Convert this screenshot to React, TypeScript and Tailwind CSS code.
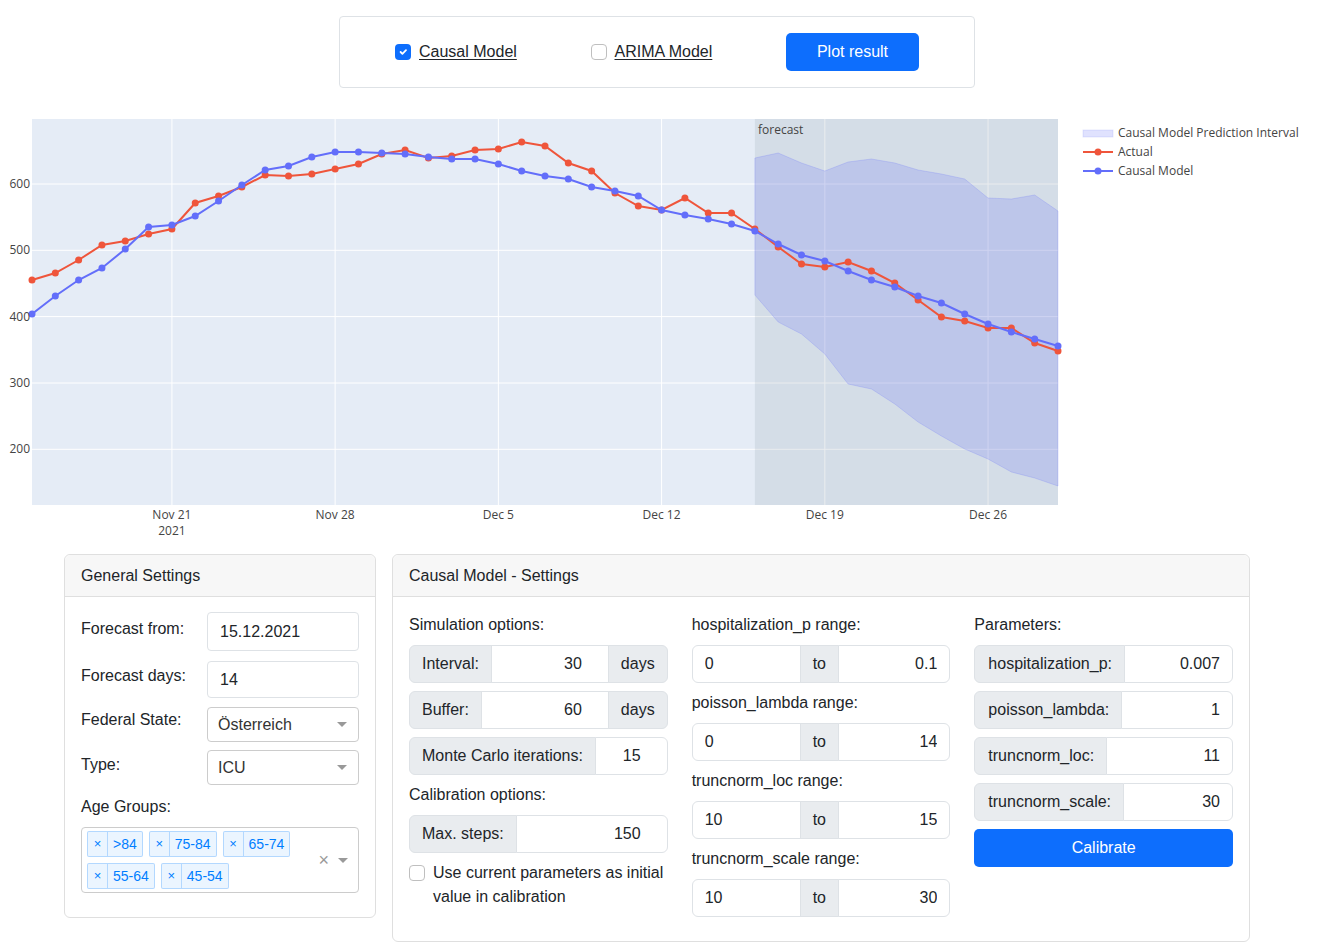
import React from 'react';

const X0 = 32;
const DX = 1026 / 44;
const xs = (i: number) => X0 + i * DX;

const red = [279, 272, 259, 244, 240, 233, 228, 202, 195, 186, 174, 175, 173, 168, 163, 153, 149, 157, 155, 149, 148, 141, 145, 162, 170, 192, 205, 209, 197, 212, 212, 228, 246, 263, 266, 261, 270, 282, 299, 316, 320, 327, 327, 342, 350];
const blue = [313, 295, 279, 267, 248, 226, 224, 215, 200, 184, 169, 165, 156, 151, 151, 152, 153, 156, 158, 158, 163, 170, 175, 178, 186, 190, 195, 209, 214, 218, 223, 230, 243, 254, 260, 270, 279, 286, 295, 302, 313, 323, 331, 338, 345];
const up = [157, 152, 162, 170, 161, 158, 162, 169, 173, 178, 197, 198, 194, 210];
const lo = [294, 321, 333, 353, 383, 388, 403, 421, 435, 448, 458, 471, 477, 485];

const yTicks: [string, number][] = [
  ['600', 183],
  ['500', 249.3],
  ['400', 315.6],
  ['300', 382],
  ['200', 448.3],
];
const xTicks: [string, number][] = [
  ['Nov 21', 6],
  ['Nov 28', 13],
  ['Dec 5', 20],
  ['Dec 12', 27],
  ['Dec 19', 34],
  ['Dec 26', 41],
];

function Chart() {
  const pts = (arr: number[]) => arr.map((y, i) => `${xs(i).toFixed(1)},${y}`).join(' ');
  const upPts = up.map((y, i) => `${xs(i + 31).toFixed(1)},${y}`);
  const loPts = lo.map((y, i) => `${xs(i + 31).toFixed(1)},${y}`);
  const band = [...upPts, ...loPts.slice().reverse()].join(' ');
  const font = "'Open Sans', 'Liberation Sans', sans-serif";
  return (
    <svg width={1321} height={466} viewBox="0 87 1321 466" className="block">
      <rect x={32} y={118} width={1026} height={386} fill="#e5ecf6" />
      {yTicks.map(([, y]) => (
        <line key={y} x1={32} x2={1058} y1={y} y2={y} stroke="#ffffff" strokeWidth={1} />
      ))}
      {xTicks.map(([, i]) => (
        <line key={i} x1={xs(i)} x2={xs(i)} y1={118} y2={504} stroke="#ffffff" strokeWidth={1} />
      ))}
      <rect x={xs(31)} y={118} width={1058 - xs(31)} height={386} fill="#7f8c9c" fillOpacity={0.16} />
      <polygon points={band} fill="rgba(99,110,250,0.2)" stroke="rgba(99,110,250,0.22)" strokeWidth={1} />
      <polyline points={pts(red)} fill="none" stroke="#ef553b" strokeWidth={2} />
      {red.map((y, i) => (
        <circle key={i} cx={xs(i)} cy={y} r={3.5} fill="#ef553b" />
      ))}
      <polyline points={pts(blue)} fill="none" stroke="#636efa" strokeWidth={2} />
      {blue.map((y, i) => (
        <circle key={i} cx={xs(i)} cy={y} r={3.5} fill="#636efa" />
      ))}
      <text x={758} y={133} fontSize={12} fill="#444" fontFamily={font}>forecast</text>
      {yTicks.map(([t, y]) => (
        <text key={t} x={30} y={y + 4} fontSize={12} fill="#444" textAnchor="end" fontFamily={font}>{t}</text>
      ))}
      {xTicks.map(([t, i]) => (
        <text key={t} x={xs(i)} y={518} fontSize={12} fill="#444" textAnchor="middle" fontFamily={font}>{t}</text>
      ))}
      <text x={xs(6)} y={534} fontSize={12} fill="#444" textAnchor="middle" fontFamily={font}>2021</text>
      {/* legend */}
      <rect x={1083} y={129} width={30} height={7} fill="rgba(99,110,250,0.2)" stroke="rgba(99,110,250,0.15)" />
      <text x={1118} y={136} fontSize={12} fill="#444" fontFamily={font}>Causal Model Prediction Interval</text>
      <line x1={1083} x2={1113} y1={151} y2={151} stroke="#ef553b" strokeWidth={2} />
      <circle cx={1098} cy={151} r={3.5} fill="#ef553b" />
      <text x={1118} y={155} fontSize={12} fill="#444" fontFamily={font}>Actual</text>
      <line x1={1083} x2={1113} y1={170} y2={170} stroke="#636efa" strokeWidth={2} />
      <circle cx={1098} cy={170} r={3.5} fill="#636efa" />
      <text x={1118} y={174} fontSize={12} fill="#444" fontFamily={font}>Causal Model</text>
    </svg>
  );
}

function CheckedBox() {
  return (
    <span className="flex h-4 w-4 shrink-0 items-center justify-center rounded-[4px] bg-[#0d6efd]">
      <svg width="12" height="12" viewBox="0 0 20 20">
        <path d="M6 10l3 3 6-6" fill="none" stroke="#fff" strokeWidth="3" strokeLinecap="round" strokeLinejoin="round" />
      </svg>
    </span>
  );
}

function EmptyBox() {
  return <span className="block h-4 w-4 shrink-0 rounded-[4px] border border-[#bfbfbf] bg-white" />;
}

function Caret() {
  return <span className="block h-0 w-0 border-x-[5px] border-t-[5px] border-x-transparent border-t-[#999]" />;
}

function Addon({ children, className = '' }: { children: React.ReactNode; className?: string }) {
  return (
    <div className={`flex items-center whitespace-nowrap border border-[#dee2e6] bg-[#e9ecef] px-3 text-[16px] text-[#212529] ${className}`}>
      {children}
    </div>
  );
}

function Field({ value, className = '' }: { value: string; className?: string }) {
  return (
    <input
      readOnly
      defaultValue={value}
      className={`h-full min-w-0 flex-1 border border-[#dee2e6] bg-white text-[16px] text-[#212529] outline-none ${className}`}
    />
  );
}

function SimGroup({ label, value, unit }: { label: string; value: string; unit?: string }) {
  return (
    <div className="flex h-[38px]">
      <Addon className="rounded-l-[6px]">{label}</Addon>
      <Field value={value} className={`-ml-px pr-[26px] text-right ${unit ? '' : 'rounded-r-[6px]'}`} />
      {unit && <Addon className="-ml-px rounded-r-[6px]">{unit}</Addon>}
    </div>
  );
}

function RangeGroup({ label, a, b }: { label: string; a: string; b: string }) {
  return (
    <div className="flex flex-col">
      <div className="mb-2 h-6 leading-6">{label}</div>
      <div className="mb-2 flex h-[38px]">
        <Field value={a} className="w-[109px] flex-none rounded-l-[6px] pl-3" />
        <Addon className="-ml-px">to</Addon>
        <Field value={b} className="-ml-px rounded-r-[6px] pr-3 text-right" />
      </div>
    </div>
  );
}

function ParamGroup({ label, value }: { label: string; value: string }) {
  return (
    <div className="mb-2 flex h-[38px]">
      <Addon className="rounded-l-[6px] pl-[13px]">{label}</Addon>
      <Field value={value} className="-ml-px rounded-r-[6px] pr-3 text-right" />
    </div>
  );
}

function Tag({ label }: { label: string }) {
  return (
    <div className="flex h-[26px] items-stretch rounded-[2px] border border-[rgba(0,126,255,0.24)] bg-[rgba(0,126,255,0.08)] text-[14px] text-[#007eff]">
      <span className="flex w-5 items-center justify-center border-r border-[rgba(0,126,255,0.24)] text-[13px]">×</span>
      <span className="flex items-center px-[5px]">{label}</span>
    </div>
  );
}

function SelectBox({ value }: { value: string }) {
  return (
    <div className="flex h-full w-full items-center justify-between rounded-[4px] border border-[#ccc] bg-white pl-[10px] pr-[11px] text-[16px] text-[#333]">
      <span>{value}</span>
      <Caret />
    </div>
  );
}

export default function App() {
  return (
    <div className="min-h-[952px] w-[1321px] bg-white font-['Liberation_Sans',Arial,sans-serif] text-[16px] leading-6 text-[#212529]">
      {/* top controls */}
      <div className="pt-4">
        <div className="ml-[339px] flex h-[72px] w-[636px] items-center justify-between rounded-[4px] border border-[#dee2e6] px-[55px]">
          <label className="flex items-center gap-2">
            <CheckedBox />
            <span className="underline underline-offset-2">Causal Model</span>
          </label>
          <label className="flex items-center gap-2">
            <EmptyBox />
            <span className="underline underline-offset-2">ARIMA Model</span>
          </label>
          <button className="h-[38px] w-[133px] rounded-[5px] bg-[#0d6efd] text-[16px] text-white">Plot result</button>
        </div>
      </div>

      <Chart />

      {/* settings */}
      <div className="flex items-start gap-4 pl-[64px]">
        {/* General Settings */}
        <div className="w-[312px] rounded-[6px] border border-[#dfdfdf]">
          <div className="flex h-[42px] items-center rounded-t-[6px] border-b border-[#dfdfdf] bg-[#f7f7f7] px-4">General Settings</div>
          <div className="flex flex-col px-4 pt-[15px] pb-6">
            <div className="flex h-[39px] items-start">
              <div className="w-[126px] pt-[5px]">Forecast from:</div>
              <input readOnly defaultValue="15.12.2021" className="h-full w-[152px] rounded-[4px] border border-[#dee2e6] pl-3 text-[16px] text-[#212529] outline-none" />
            </div>
            <div className="mt-[10px] flex h-[37px] items-start">
              <div className="w-[126px] pt-[3px]">Forecast days:</div>
              <input readOnly defaultValue="14" className="h-full w-[152px] rounded-[4px] border border-[#dee2e6] pl-3 text-[16px] text-[#212529] outline-none" />
            </div>
            <div className="mt-[9px] flex h-[35px] items-start">
              <div className="w-[126px] pt-[1px]">Federal State:</div>
              <div className="h-full w-[152px]"><SelectBox value="Österreich" /></div>
            </div>
            <div className="mt-[8px] flex h-[35px] items-start">
              <div className="w-[126px] pt-[3px]">Type:</div>
              <div className="h-full w-[152px]"><SelectBox value="ICU" /></div>
            </div>
            <div className="mt-[10px] h-6">Age Groups:</div>
            <div className="mt-2 flex h-[66px] items-center rounded-[4px] border border-[#ccc] bg-white">
              <div className="flex flex-1 flex-wrap gap-[6px] pl-[5px]">
                <Tag label=">84" />
                <Tag label="75-84" />
                <Tag label="65-74" />
                <Tag label="55-64" />
                <Tag label="45-54" />
              </div>
              <div className="flex items-center gap-[9px] pr-[10px]">
                <span className="text-[18px] leading-none text-[#999]">×</span>
                <Caret />
              </div>
            </div>
          </div>
        </div>

        {/* Causal Model settings */}
        <div className="w-[858px] rounded-[6px] border border-[#dfdfdf]">
          <div className="flex h-[42px] items-center rounded-t-[6px] border-b border-[#dfdfdf] bg-[#f7f7f7] px-4">Causal Model - Settings</div>
          <div className="grid grid-cols-3 gap-x-6 p-4">
            {/* col 1 */}
            <div className="flex flex-col">
              <div className="mb-2 h-6">Simulation options:</div>
              <div className="mb-2"><SimGroup label="Interval:" value="30" unit="days" /></div>
              <div className="mb-2"><SimGroup label="Buffer:" value="60" unit="days" /></div>
              <div className="mb-2"><SimGroup label="Monte Carlo iterations:" value="15" /></div>
              <div className="mb-2 h-6">Calibration options:</div>
              <div className="mb-2"><SimGroup label="Max. steps:" value="150" /></div>
              <label className="flex items-start gap-2">
                <span className="mt-1"><EmptyBox /></span>
                <span>Use current parameters as initial value in calibration</span>
              </label>
            </div>
            {/* col 2 */}
            <div className="flex flex-col">
              <RangeGroup label="hospitalization_p range:" a="0" b="0.1" />
              <RangeGroup label="poisson_lambda range:" a="0" b="14" />
              <RangeGroup label="truncnorm_loc range:" a="10" b="15" />
              <RangeGroup label="truncnorm_scale range:" a="10" b="30" />
            </div>
            {/* col 3 */}
            <div className="flex flex-col">
              <div className="mb-2 h-6">Parameters:</div>
              <ParamGroup label="hospitalization_p:" value="0.007" />
              <ParamGroup label="poisson_lambda:" value="1" />
              <ParamGroup label="truncnorm_loc:" value="11" />
              <ParamGroup label="truncnorm_scale:" value="30" />
              <button className="h-[38px] w-full rounded-[5px] bg-[#0d6efd] text-[16px] text-white">Calibrate</button>
            </div>
          </div>
        </div>
      </div>
    </div>
  );
}
